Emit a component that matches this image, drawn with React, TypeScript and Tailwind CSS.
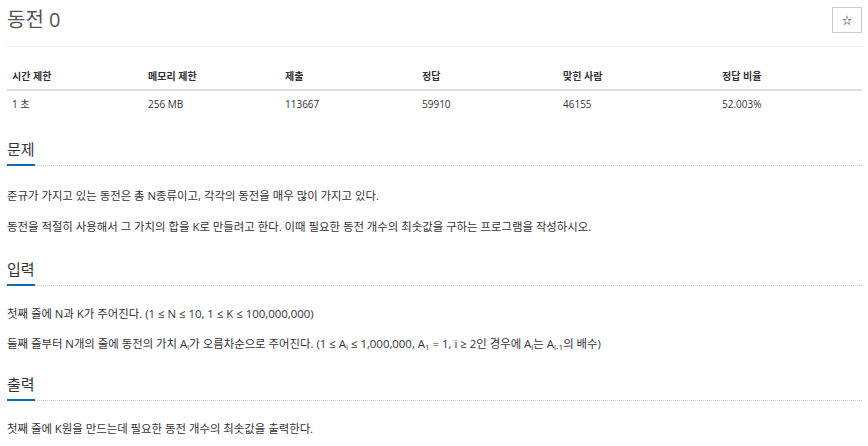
import React from "react";

const font = { fontFamily: '"Open Sans", "Noto Sans CJK KR", sans-serif' };

const headers = ["시간 제한", "메모리 제한", "제출", "정답", "맞힌 사람", "정답 비율"];
const values = ["1 초", "256 MB", "113667", "59910", "46155", "52.003%"];

function SectionTitle({ children, mt }: { children: React.ReactNode; mt: string }) {
  return (
    <div className={`${mt} border-b border-dotted border-[#cccccc]`}>
      <span className="inline-block -mb-px border-b-2 border-[#0e6bb0] pb-[4px] text-[15px] leading-[22px] text-[#333333]">
        {children}
      </span>
    </div>
  );
}

export default function App() {
  return (
    <div className="w-[868px] bg-white px-[7px] text-[#333333]" style={font}>
      <div className="w-[855px]">
        <div className="flex items-center justify-between border-b border-[#eeeeee] pt-[7px] pb-[13px]">
          <h1 className="text-[20px] leading-[26px] font-normal text-[#555555]">동전 0</h1>
          <button className="flex h-[26px] w-[30px] items-center justify-center border border-[#cccccc] bg-white text-[10px] text-[#333333]">
            ☆
          </button>
        </div>

        <div className="mt-[17px]">
          <div className="grid h-[27px] grid-cols-[136px_137px_137px_141px_159px_1fr] items-center border-b-2 border-[#dddddd] text-[10px] font-bold">
            {headers.map((h) => (
              <div key={h} className="px-[5px]">{h}</div>
            ))}
          </div>
          <div className="grid h-[26px] grid-cols-[136px_137px_137px_141px_159px_1fr] items-center text-[10px]">
            {values.map((v) => (
              <div key={v} className="px-[5px]">{v}</div>
            ))}
          </div>
        </div>

        <SectionTitle mt="mt-[20px]">문제</SectionTitle>
        <div className="text-[11.4px] leading-[20px]">
          <p className="mt-[20px]">준규가 가지고 있는 동전은 총 N종류이고, 각각의 동전을 매우 많이 가지고 있다.</p>
          <p className="mt-[11px]">동전을 적절히 사용해서 그 가치의 합을 K로 만들려고 한다. 이때 필요한 동전 개수의 최솟값을 구하는 프로그램을 작성하시오.</p>
        </div>

        <SectionTitle mt="mt-[20px]">입력</SectionTitle>
        <div className="text-[11.4px] leading-[20px]">
          <p className="mt-[18px]">첫째 줄에 N과 K가 주어진다. (1 ≤ N ≤ 10, 1 ≤ K ≤ 100,000,000)</p>
          <p className="mt-[10px]">
            둘째 줄부터 N개의 줄에 동전의 가치 A<sub className="text-[8px]">i</sub>가 오름차순으로 주어진다. (1 ≤ A<sub className="text-[8px]">i</sub> ≤ 1,000,000, A<sub className="text-[8px]">1</sub> = 1, i ≥ 2인 경우에 A<sub className="text-[8px]">i</sub>는 A<sub className="text-[8px]">i-1</sub>의 배수)
          </p>
        </div>

        <SectionTitle mt="mt-[18px]">출력</SectionTitle>
        <div className="text-[11.4px] leading-[20px]">
          <p className="mt-[18px]">첫째 줄에 K원을 만드는데 필요한 동전 개수의 최솟값을 출력한다.</p>
        </div>
      </div>
    </div>
  );
}
